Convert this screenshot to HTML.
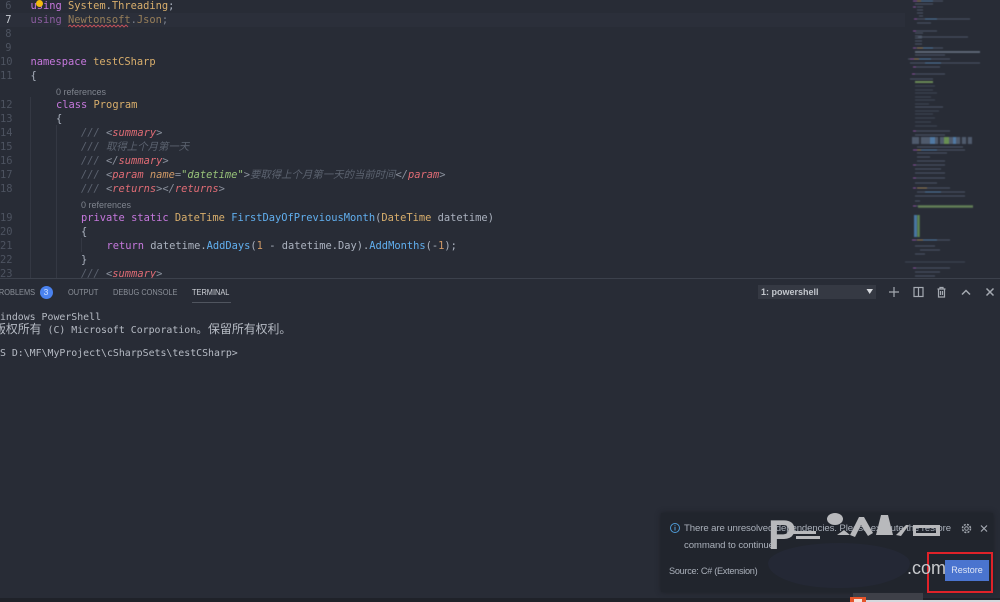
<!DOCTYPE html>
<html><head><meta charset="utf-8">
<style>
html,body{margin:0;padding:0;background:#282c36;}
body{width:1000px;height:602px;position:relative;overflow:hidden;font-family:"DejaVu Sans Mono","Noto Sans CJK SC",monospace;}
.l{position:absolute;white-space:pre;font-size:10.4px;line-height:14px;height:14px;color:#abb2bf;filter:blur(.3px);margin-top:1px;}
.n{position:absolute;width:11.5px;left:0;text-align:right;font-size:10.4px;line-height:14px;color:#4d5360;filter:blur(.3px);margin-top:1px;}
.k{color:#c678dd}.t{color:#d8ae6c}.c{color:#5c6370;font-style:italic}.g{color:#e06c75;font-style:italic}.a{color:#d19a66;font-style:italic}.s{color:#98c379;font-style:italic}.f{color:#61afef}.d{color:#d19a66}.p{color:#8a909c;font-style:italic}
.r{position:absolute;font:9px "Liberation Sans",sans-serif;color:#7f848e;white-space:pre;line-height:12px;margin-top:0;}
.tab{position:absolute;top:286px;font:8.6px/12px "Liberation Sans",sans-serif;color:#8b9099;white-space:pre;transform:scaleX(.86);transform-origin:0 0;}
.tm{position:absolute;left:-6px;white-space:pre;font-size:9.9px;line-height:14px;color:#b6bbc4;filter:blur(.2px);}
.tm b{font-weight:normal;font-size:11.9px;font-family:"Noto Sans CJK SC",sans-serif;}
.nt{position:absolute;font:9.6px/13px "Liberation Sans",sans-serif;color:#aab0ba;white-space:pre;letter-spacing:-.1px;}
</style></head><body>

<div style="position:absolute;left:0;top:13px;width:905px;height:14px;background:#2b2f3a"></div>
<div style="position:absolute;left:30px;top:97px;width:1px;height:181px;background:#343843"></div>
<div style="position:absolute;left:56px;top:125px;width:1px;height:153px;background:#343843"></div>
<div style="position:absolute;left:81px;top:238px;width:1px;height:14px;background:#343843"></div>

<div class="n" style="top:-2px">6</div><div class="n" style="top:12px;color:#c8ccd3">7</div><div class="n" style="top:26px">8</div><div class="n" style="top:40px">9</div><div class="n" style="top:54px">10</div><div class="n" style="top:68px">11</div><div class="n" style="top:97px">12</div><div class="n" style="top:111px">13</div><div class="n" style="top:125px">14</div><div class="n" style="top:139px">15</div><div class="n" style="top:153px">16</div><div class="n" style="top:167px">17</div><div class="n" style="top:181px">18</div><div class="n" style="top:210px">19</div><div class="n" style="top:224px">20</div><div class="n" style="top:238px">21</div><div class="n" style="top:252px">22</div><div class="n" style="top:266px">23</div>

<div class="l" style="left:30.5px;top:-2px"><span class="k">using</span> <span class="t">System</span>.<span class="t">Threading</span>;</div>
<div class="l" style="left:30.5px;top:12px;opacity:.62"><span class="k">using</span> <span class="t">Newtonsoft</span>.<span class="t">Json</span>;</div>
<svg style="position:absolute;left:68px;top:24px" width="64" height="5"><path d="M0 2.5l2-1.5 2 2 2-2 2 2 2-2 2 2 2-2 2 2 2-2 2 2 2-2 2 2 2-2 2 2 2-2 2 2 2-2 2 2 2-2 2 2 2-2 2 2 2-2 2 2 2-2 2 2 2-2 2 2 2-2 2 2" fill="none" stroke="#c2505a" stroke-width=".9"/></svg>
<div class="l" style="left:30.5px;top:54px"><span class="k">namespace</span> <span class="t">testCSharp</span></div>
<div class="l" style="left:30.5px;top:68px">{</div>
<div class="r" style="left:56px;top:86px">0 references</div>
<div class="l" style="left:56px;top:97px"><span class="k">class</span> <span class="t">Program</span></div>
<div class="l" style="left:56px;top:111px">{</div>
<div class="l" style="left:81px;top:125px"><span class="c">/// </span><span class="p">&lt;</span><span class="g">summary</span><span class="p">&gt;</span></div>
<div class="l" style="left:81px;top:139px"><span class="c">/// 取得上个月第一天</span></div>
<div class="l" style="left:81px;top:153px"><span class="c">/// </span><span class="p">&lt;/</span><span class="g">summary</span><span class="p">&gt;</span></div>
<div class="l" style="left:81px;top:167px"><span class="c">/// </span><span class="p">&lt;</span><span class="g">param</span> <span class="a">name</span><span class="p">=</span><span class="s">"datetime"</span><span class="p">&gt;</span><span class="c">要取得上个月第一天的当前时间</span><span class="p">&lt;/</span><span class="g">param</span><span class="p">&gt;</span></div>
<div class="l" style="left:81px;top:181px"><span class="c">/// </span><span class="p">&lt;</span><span class="g">returns</span><span class="p">&gt;&lt;/</span><span class="g">returns</span><span class="p">&gt;</span></div>
<div class="r" style="left:81px;top:199px">0 references</div>
<div class="l" style="left:81px;top:210px"><span class="k">private</span> <span class="k">static</span> <span class="t">DateTime</span> <span class="f">FirstDayOfPreviousMonth</span>(<span class="t">DateTime</span> datetime)</div>
<div class="l" style="left:81px;top:224px">{</div>
<div class="l" style="left:106.500px;top:238px"><span class="k">return</span> datetime.<span class="f">AddDays</span>(<span class="d">1</span> - datetime.Day).<span class="f">AddMonths</span>(-<span class="d">1</span>);</div>
<div class="l" style="left:81px;top:252px">}</div>
<div class="l" style="left:81px;top:266px;height:12px;overflow:hidden"><span class="c">/// </span><span class="p">&lt;</span><span class="g">summary</span><span class="p">&gt;</span></div>
<div style="position:absolute;left:35.500px;top:0;width:7px;height:7px;border-radius:50%;background:#f2b90f"></div>

<svg style="position:absolute;left:905px;top:0;filter:blur(.5px)" width="95" height="278" fill="none" stroke-width="1.100" opacity=".8">
<g stroke="#566071">
<path d="M10 1h28M10 4h18M12 7h6M12 10h6M12 13h6M14 16h4M10 19h55M12 23h14M8 31h24M10 33h8M10 36h7M10 38h7M13 37h50M10 41h7M10 44h7M8 48h30M10 55h30M3 59h42M5 63h70M8 67h27M10 74h30M5 79h23"/>
<path d="M10 107h28M8 131h37M10 135h30M12 147h46M12 150h48M12 153h30M12 157h13M12 161h28M10 165h30M10 169h26M10 173h30M10 178h30M10 183h22M12 188h33M12 192h48M10 196h50M10 201h5M10 206h20M8 240h37M10 246h20M15 250h20M10 254h10M10 268h35M10 272h25M10 276h20"/>
</g>
<g stroke="#454d5d"><path d="M10 86h20M10 90h18M10 93h22M10 97h16M10 100h20M10 104h14M10 111h24M10 114h18M10 118h20M10 122h16M10 126h22M0 262h60"/></g>
<g stroke="#a15bb5"><path d="M8 1h4M8 7h3M9 19h3M8 31h3M8 48h3M5 59h4M8 67h3M7 74h3M8 131h3M8 150h4M8 165h3M8 178h3M8 188h3M8 206h3M7 240h4M8 268h3"/></g>
<g stroke="#5d8fc0"><path d="M16 1h12M20 19h12M18 48h10M14 59h12M20 63h16M16 150h16M20 192h16M18 240h14"/></g>
<g stroke="#b4925f"><path d="M12 1h4M12 48h6M9 59h5M12 150h4M12 240h6M12 188h10"/></g>
<path d="M10 52h65" stroke="#7c8a9a" stroke-width="1.400"/>
<path d="M10 82h18" stroke="#7aa05e" stroke-width="2"/>
<g stroke-width="7"><path d="M7 140.500h60" stroke="#59667a"/><path d="M25 140.500h5M48 140.500h3" stroke="#5a8dc0"/><path d="M39 140.500h5" stroke="#79a85a"/><path d="M14 140.500h2M33 140.500h2M55 140.500h2M61 140.500h2" stroke="#2e323d"/></g>
<path d="M13 206.500h55" stroke="#70925e" stroke-width="2.500"/>
<path d="M10.500 215v22" stroke="#4f88bd" stroke-width="3"/><path d="M13.500 215v22" stroke="#6c9a58" stroke-width="2.500"/>
</svg>

<div style="position:absolute;left:0;top:278px;width:1000px;height:1px;background:#3c414c"></div>
<div style="position:absolute;left:0;top:279px;width:1000px;height:319px;background:#282c36"></div>
<div class="tab" style="left:-6px">PROBLEMS</div>
<div style="position:absolute;left:39.500px;top:285.500px;width:13px;height:13px;border-radius:50%;background:#4a82ef;color:#cfe0ff;font:8.5px/13px 'Liberation Sans',sans-serif;text-align:center">3</div>
<div class="tab" style="left:68px">OUTPUT</div>
<div class="tab" style="left:113px">DEBUG CONSOLE</div>
<div class="tab" style="left:192px;color:#d0d3d9">TERMINAL</div>
<div style="position:absolute;left:192px;top:302px;width:39px;height:1px;background:#50555f"></div>

<div style="position:absolute;left:758px;top:285px;width:118px;height:14px;background:#353943"></div>
<div style="position:absolute;left:761px;top:286px;font:bold 9px/12px 'Liberation Sans',sans-serif;color:#c3c7cd;white-space:pre">1: powershell</div>
<svg style="position:absolute;left:880px;top:282px" width="120" height="20" fill="none" stroke="#a4a9b1" stroke-width="1.200">
<path d="M14 5v10M9 10h10"/>
<rect x="34" y="5.500" width="9" height="9"/><path d="M38.500 5.500v9"/>
<path d="M57.500 7h8M60 7V5.500h3V7M58.500 7v8h6V7M60.500 9v4M62.500 9v4"/>
<path d="M82 12.500l4-4 4 4" stroke-width="1.500"/>
<path d="M106.500 6.500l7 7M113.500 6.500l-7 7" stroke-width="1.500"/>
</svg>
<svg style="position:absolute;left:866px;top:288px" width="8" height="7"><path d="M0.500 1h6.500L3.700 6z" fill="#d5d8dc"/></svg>

<div class="tm" style="top:311px">Windows PowerShell</div>
<div class="tm" style="top:322px"><b>版权所有</b> (C) Microsoft Corporation<b>。保留所有权利。</b></div>
<div class="tm" style="top:347px">PS D:\MF\MyProject\cSharpSets\testCSharp&gt;</div>

<!-- notification -->
<div style="position:absolute;left:661px;top:513px;width:332px;height:79px;background:#21252d;box-shadow:0 0 5px #1c1f26"></div>
<svg style="position:absolute;left:669px;top:522px" width="12" height="12" fill="none" stroke="#4f9bd6"><circle cx="6" cy="6" r="4.500"/><path d="M6 5v3.500M6 3.300v.9"/></svg>
<div class="nt" style="left:684px;top:522px">There are unresolved dependencies. Please execute the restore</div>
<div class="nt" style="left:684px;top:539px">command to continue.</div>
<div class="nt" style="left:669px;top:565px;font-size:9.200px;letter-spacing:-.3px">Source: C# (Extension)</div>
<svg style="position:absolute;left:960px;top:522px" width="30" height="13" fill="none" stroke="#a4a9b1"><circle cx="6.500" cy="6.500" r="1.800"/><circle cx="6.500" cy="6.500" r="4" stroke-dasharray="2 1.200" stroke-width="1.500"/><path d="M21 3.500l6 6M27 3.500l-6 6" stroke-width="1.200"/></svg>
<div style="position:absolute;left:945px;top:560px;width:44px;height:21px;background:#4a74cf;color:#dfe6f5;font:9px/21px 'Liberation Sans',sans-serif;text-align:center">Restore</div>
<div style="position:absolute;left:927px;top:552px;width:62px;height:37px;border:2px solid #e02229"></div>

<!-- watermark -->
<svg style="position:absolute;left:760px;top:505px" width="200" height="50" fill="#b8b9bc">
<path d="M30 26h26v3H30zM36 31h24v3H36z"/>
<ellipse cx="75" cy="14" rx="8" ry="6"/><path d="M77 30l7-5 6 5zM90 30l9-18 5 0 9 16-5 3-7-11-6 12zM116 30l5-20h7l5 20zM136 30l10-10h3l-8 11zM153 20h27v3h-27zM153 28h27v3H153zM153 20h3v11h-3zM176 20h4v11h-4z"/>
</svg>
<div style="position:absolute;left:768px;top:543px;width:142px;height:45px;border-radius:50% 50% 48% 48%/45% 45% 55% 55%;background:#242835"></div>
<div style="position:absolute;left:768px;top:514px;font:bold 42px/42px 'Liberation Sans',sans-serif;color:#b8b9bc;white-space:pre">P</div>
<div style="position:absolute;left:907px;top:556px;font:18px/24px 'Liberation Sans',sans-serif;color:#c7c9cc;white-space:pre">.com</div>

<!-- bottom strip -->
<div style="position:absolute;left:0;top:598px;width:1000px;height:4px;background:#1f2229"></div>
<div style="position:absolute;left:853px;top:593px;width:70px;height:9px;background:#3e4048"></div>
<div style="position:absolute;left:866px;top:600px;width:134px;height:2px;background:#d5d8dd"></div>
<div style="position:absolute;left:850px;top:597px;width:16px;height:5px;background:#e5542a"></div>
<div style="position:absolute;left:854px;top:599px;width:8px;height:3px;background:#f5e3dc"></div>
</body></html>
